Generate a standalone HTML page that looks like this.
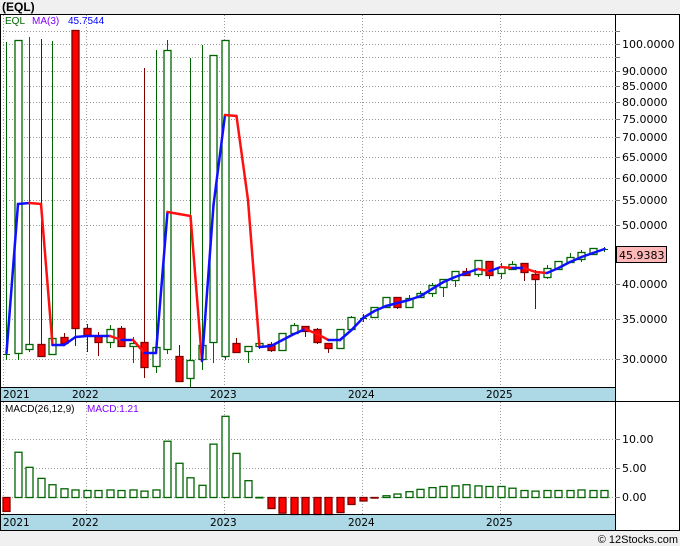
<!DOCTYPE html>
<html><head><meta charset="utf-8"><style>
html,body{margin:0;padding:0;background:#fff;}
svg{display:block;font-family:"DejaVu Sans","Liberation Sans",sans-serif;}
</style></head><body>
<svg id="s" width="680" height="546" xmlns="http://www.w3.org/2000/svg">
<rect x="0" y="0" width="680" height="14" fill="#f0f0f0"/>
<rect x="0" y="531" width="680" height="15" fill="#f0f0f0"/>
<text x="2" y="11" font-size="12" font-weight="bold" font-family="Liberation Sans,sans-serif">(EQL)</text>
<g id="grid" stroke="#999" stroke-dasharray="1,2" stroke-width="1"></g>
<rect x="0" y="387" width="615" height="14" fill="#add8e6"/>
<rect x="0" y="515" width="615" height="15" fill="#add8e6"/>
<g id="c"></g>
<g id="m"></g>
<g font-size="10.5" fill="#000">
<text x="3" y="398">2021</text><text x="72" y="398">2022</text><text x="210" y="398">2023</text><text x="348" y="398">2024</text><text x="486" y="398">2025</text>
<text x="3" y="526">2021</text><text x="72" y="526">2022</text><text x="210" y="526">2023</text><text x="348" y="526">2024</text><text x="486" y="526">2025</text>
</g>
<g font-size="10" font-family="Liberation Sans,sans-serif">
<text x="5" y="24" fill="#006400">EQL</text><text x="32" y="24" fill="#8000ff">MA(3)</text><text x="68" y="24" fill="#0000ff">45.7544</text>
<text x="5" y="412" fill="#000">MACD(26,12,9)</text><text x="87" y="412" fill="#8000ff">MACD:1.21</text>
</g>
<g font-size="11" fill="#000" id="lab">
<text x="622" y="48">100.0000</text><text x="622" y="75">90.0000</text><text x="622" y="90">85.0000</text><text x="622" y="106">80.0000</text><text x="622" y="123">75.0000</text><text x="622" y="141">70.0000</text><text x="622" y="161">65.0000</text><text x="622" y="182">60.0000</text><text x="622" y="204">55.0000</text><text x="622" y="229">50.0000</text><text x="622" y="288">40.0000</text><text x="622" y="323">35.0000</text><text x="622" y="363">30.0000</text>
<text x="622" y="443">10.00</text><text x="622" y="472">5.00</text><text x="622" y="501">0.00</text>
</g>
<rect x="616.5" y="246.5" width="50" height="16" fill="#ffb8b8" stroke="#000"/>
<text x="619" y="259" font-size="11">45.9383</text>
<g stroke="#000" fill="none" stroke-width="1">
<rect x="0.5" y="14.5" width="679" height="516"/>
<line x1="615.5" y1="14" x2="615.5" y2="531"/>
<line x1="0" y1="401.5" x2="680" y2="401.5"/>
<line x1="0" y1="387.5" x2="615" y2="387.5"/>
<line x1="0" y1="514.5" x2="615" y2="514.5"/>
</g>
<g id="tk" stroke="#777"></g>
<text x="678" y="543" font-size="11" text-anchor="end" font-family="Liberation Sans,sans-serif">© 12Stocks.com</text>
</svg>
<script>
var NS="http://www.w3.org/2000/svg";
function el(p,t,a){var e=document.createElementNS(NS,t);for(var k in a)e.setAttribute(k,a[k]);document.getElementById(p).appendChild(e);return e;}
var hy=[31,44,57,71,86,102,119,137,157,178,200,225,284,319,359];
hy.forEach(function(y){el('grid','line',{x1:0,x2:615,y1:y+.5,y2:y+.5});el('tk','line',{x1:615,x2:620,y1:y+.5,y2:y+.5});});
[439,468,497].forEach(function(y){el('grid','line',{x1:0,x2:615,y1:y+.5,y2:y+.5});el('tk','line',{x1:615,x2:620,y1:y+.5,y2:y+.5});});
[3,86,224,362,500].forEach(function(x){el('grid','line',{x1:x+.5,x2:x+.5,y1:15,y2:387});el('grid','line',{x1:x+.5,x2:x+.5,y1:402,y2:515});});
// candles: [color, bodyTop, bodyBot, wickTop, wickBot]
var C=[['g',354,354,42,360],['g',40,353,40,360],['g',344,349,37,352],['r',344,356,39,356],['g',338,354,41,354],['r',337,343,333,343],['r',30,328,30,346],['r',328,335,324,352],['r',336,342,332,356],['g',329,342,325,348],['r',328,346,326,346],['g',343,346,337,363],['r',342,367,68,378],['g',347,366,50,373],['g',50,349,40,354],['r',356,381,345,381],['g',360,378,58,387],['g',345,359,45,370],['g',55,342,55,363],['g',40,356,40,360],['r',343,352,338,353],['g',346,351,346,363],['g',343,346,343,349],['r',344,350,342,352],['g',333,350,333,350],['g',325,333,323,333],['r',326,331,326,337],['r',329,342,328,344],['r',343,348,343,353],['g',329,348,329,348],['g',317,329,316,329],['g',318,318,314,322],['g',307,317,307,317],['g',297,307,297,307],['r',297,307,297,309],['g',298,307,295,307],['g',293,297,291,297],['g',285,293,283,297],['g',279,287,279,297],['g',271,280,271,287],['r',271,275,268,275],['g',260,274,260,277],['r',261,275,261,279],['g',267,273,263,279],['g',264,269,261,269],['r',263,272,263,281],['r',274,279,270,309],['g',268,277,265,279],['g',261,269,261,269],['g',257,262,253,262],['g',252,259,250,262],['g',248,254,248,254],['g',249,249,247,252]];
C.forEach(function(c,i){var x=Math.round(6+11.5*i);var g=c[0]=='g';var sc=g?'#006400':'#800000';
el('c','line',{x1:x+.5,x2:x+.5,y1:c[3],y2:c[4],stroke:sc});
if(c[2]-c[1]<1){el('c','line',{x1:x-3,x2:x+4,y1:c[1]+.5,y2:c[1]+.5,stroke:sc});}
else el('c','rect',{x:x-3,y:c[1]+.5,width:7,height:c[2]-c[1],fill:g?'#fff':'#f00',stroke:sc,'stroke-width':1.3});});
var M=[353,204,203,204,345,345,337,336,336,336,340,340,353,353,212,214,216,361,205,115,116,200,347,346,340,334,329,334,340,340,330,318,311,306,303,300,296,289,282,277,273,269,271,267,268,268,272,273,268,262,257,253,249];
for(var i=0;i<M.length-1;i++){var x1=6+11.5*i,x2=x1+11.5;el('c','line',{x1:x1+.5,x2:x2+.5,y1:M[i],y2:M[i+1],stroke:M[i+1]>M[i]?'#ff1010':'#1010ff','stroke-width':2.5,'stroke-linecap':'round'});}
var B=[-2.4,7.8,5.2,3.3,2.2,1.5,1.3,1.2,1.2,1.3,1.2,1.3,1.1,1.3,9.7,5.9,3.4,2.1,9.2,14.0,7.6,2.9,0.02,-1.9,-2.7,-3,-3,-3,-3,-2.6,-1.2,-0.6,-0.1,0.3,0.6,1.0,1.4,1.7,1.9,2.0,2.2,2.0,1.9,1.9,1.6,1.2,1.1,1.2,1.2,1.2,1.3,1.2,1.2];
B.forEach(function(v,i){var x=Math.round(6+11.5*i);var h=v*5.8;var y0=497;
if(v>=0){el('m','rect',{x:x-3,y:y0-h+.5,width:7,height:Math.max(h,0.5),fill:'#fff',stroke:'#006400','stroke-width':1.3});}
else{var hh=Math.min(-h,17);el('m','rect',{x:x-3,y:y0+.5,width:7,height:hh,fill:'#f00',stroke:'#800000','stroke-width':1.3});}});
</script>
</body></html>
